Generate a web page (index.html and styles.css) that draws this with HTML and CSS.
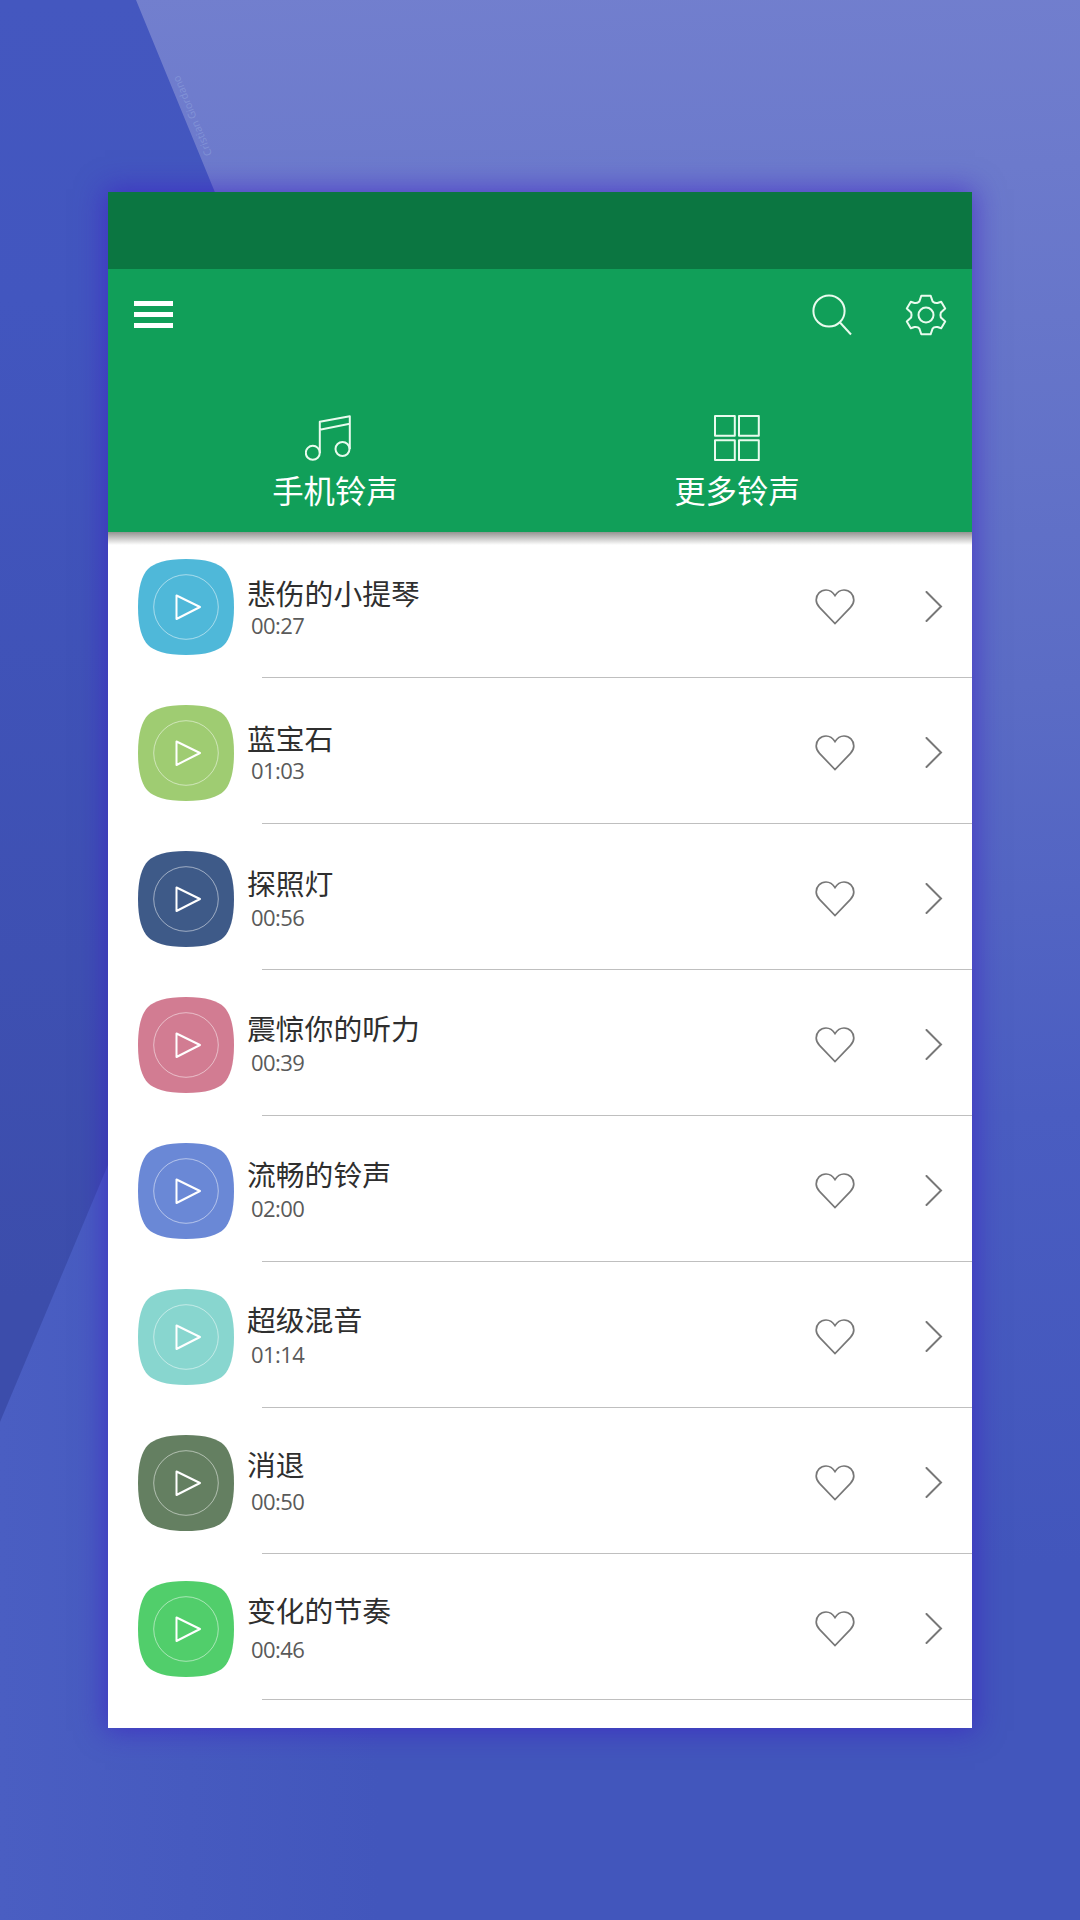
FILE: index.html
```html
<!DOCTYPE html>
<html lang="zh-CN">
<head>
    <meta charset="UTF-8">
    <meta name="viewport" content="width=device-width, initial-scale=1.0">
    <title>手机铃声</title>
    <link rel="stylesheet" href="styles.css">
</head>
<body>
    <div class="backdrop">
        <div class="shape-top"></div>
        <div class="shape-bottom"></div>
        <span class="signature">Cristian Giordano</span>
    </div>

    <div class="phone">
        <div class="status-bar"></div>
        <header class="header">
            <div class="toolbar">
                <div class="menu-btn"><span></span><span></span><span></span></div>
                <div class="actions">
                    <svg class="icon" width="40" height="42" viewBox="0 0 40 42">
                        <circle cx="17" cy="17" r="15.6"/>
                        <path d="M28 28.5L39 40.5"/>
                    </svg>
                    <svg class="icon" width="42" height="42" viewBox="-21 -21 42 42">
                        <path d="M-4.7-19.3H4.6L6.6-13.6Q9-11.5 11.5-12L15.2-13.3L19.2-6.6L14.9-2.6Q14 0 14.9 2.6L19.2 6.6L15.2 13.3L11.5 12Q8 11.5 6.6 13.6L4.6 19.3H-4.7L-6.6 13.6Q-8 11.5-11.5 12L-15.2 13.3L-19.2 6.6L-14.9 2.6Q-14 0-14.9-2.6L-19.2-6.6L-15.2-13.3L-11.5-12Q-9-11.5-6.6-13.6Z"/>
                        <circle r="7.5"/>
                    </svg>
                </div>
            </div>
            <nav class="tabs">
                <div class="tab">
                    <svg class="icon icon-music" width="46" height="46" viewBox="0 0 46 46">
                        <circle cx="7.8" cy="37.8" r="7"/>
                        <circle cx="37.5" cy="34" r="7"/>
                        <path d="M14.8 38V6.8L44.8 1.2V34M14.8 14.8L44.8 8.8"/>
                    </svg>
                    <span>手机铃声</span>
                </div>
                <div class="tab">
                    <svg class="icon" width="46" height="46" viewBox="0 0 46 46">
                        <path d="M1 1H20.8V20.8H1ZM25 1H44.8V20.8H25ZM1 25.2H20.8V45H1ZM25 25.2H44.8V45H25Z"/>
                    </svg>
                    <span>更多铃声</span>
                </div>
            </nav>
        </header>

        <ul class="song-list"></ul>
    </div>

    <script src="script.js"></script>
</body>
</html>
```
FILE: styles.css
```css
* {
    box-sizing: border-box;
}

body {
    margin: 0;
    height: 1920px;
    padding: 192px 108px;
    position: relative;
    overflow: hidden;
    font-family: "Noto Sans CJK SC", sans-serif;
}

/* background */
.backdrop {
    position: absolute;
    inset: 0;
    z-index: -1;
    background: linear-gradient(180deg, #4457bf 0, #4256bf 300px, #3c4dab 1300px, #3c4dab 1500px);
}

.shape-top {
    position: absolute;
    inset: 0;
    background: linear-gradient(178deg, #727fce 0, #6c7acc 200px, #5b6cc5 720px, #4a5dc1 1150px, #4256bc 1600px, #4256bc 100%);
    clip-path: polygon(136px 0, 100% 0, 100% 100%, 600px 100%, 600px 1130px);
}

.shape-bottom {
    position: absolute;
    inset: 0;
    background: linear-gradient(90deg, #4a5ec2 0, #4256bc 380px);
    clip-path: polygon(0 1422px, 500px 232px, 960px 1728px, 960px 100%, 0 100%);
}

.signature {
    position: absolute;
    left: 147px;
    top: 109px;
    width: 90px;
    text-align: center;
    line-height: 14px;
    font-family: "Open Sans", sans-serif;
    font-size: 10.5px;
    white-space: nowrap;
    color: rgba(150, 170, 225, 0.5);
    transform: rotate(247.5deg);
}

/* app screen */
.phone {
    height: 1536px;
    background-color: #fff;
    box-shadow: 0 0 26px 3px rgba(58, 20, 195, 0.55);
}

.status-bar {
    height: 77px;
    background-color: #0b7641;
}

.header {
    position: relative;
    height: 263px;
    background-color: #119f59;
}

.header::after {
    content: "";
    position: absolute;
    left: 0;
    right: 0;
    top: 100%;
    height: 13px;
    background: linear-gradient(#959492, rgba(255, 255, 255, 0));
}

.toolbar {
    display: flex;
    justify-content: space-between;
    align-items: center;
    height: 91px;
    padding: 0 25px 0 26px;
}

.menu-btn {
    display: flex;
    flex-direction: column;
    gap: 6px;
    width: 39px;
}

.menu-btn span {
    height: 4.7px;
    background-color: #fff;
}

.actions {
    display: flex;
    gap: 53px;
}

.icon {
    display: block;
    fill: none;
    stroke: #e9fbee;
    stroke-width: 2;
    stroke-linejoin: round;
}

.icon-music {
    margin-right: 14px;
}

.tabs {
    display: flex;
    padding: 55px 34px 0 26px;
}

.tab {
    flex: 1;
    display: flex;
    flex-direction: column;
    align-items: center;
    gap: 7px;
    font-size: 31.4px;
    line-height: 44px;
    color: #fff;
}

/* ringtones */
.song-list {
    list-style: none;
    margin: 0;
    padding: 0;
}

.song {
    position: relative;
    display: flex;
    align-items: center;
    height: 146px;
    padding: 4px 29px 0 30px;
}

.song::after {
    content: "";
    position: absolute;
    left: 154px;
    right: 0;
    bottom: 0;
    height: 1px;
    background-color: #bfbfbf;
}

.play-btn circle,
.play-btn .triangle {
    fill: none;
    stroke: #fff;
}

.play-btn circle {
    opacity: 0.5;
}

.play-btn .triangle {
    stroke-width: 2;
    stroke-linejoin: round;
}

.song-info {
    align-self: flex-start;
    flex: 1;
    margin-left: 13px;
}

.song-title {
    font-size: 28.8px;
    line-height: 34px;
    color: #2f2f2f;
}

.song-time {
    padding-left: 4px;
    font-family: "Open Sans", sans-serif;
    font-size: 22px;
    line-height: 24px;
    letter-spacing: -0.55px;
    color: #5a5a5a;
}

.heart,
.arrow {
    fill: none;
    stroke: #777;
    stroke-width: 1.7;
}

.heart {
    margin-right: 70px;
}

.arrow {
    stroke-width: 2;
    stroke-linecap: round;
}
```
FILE: script.js
```javascript
// top = space above the title, gap = space between title and time
const songs = [
    { title: "悲伤的小提琴", time: "00:27", color: "#4fb8d9", top: 40, gap: 3 },
    { title: "蓝宝石", time: "01:03", color: "#9fcc72", top: 39, gap: 3 },
    { title: "探照灯", time: "00:56", color: "#3e5a88", top: 38, gap: 5 },
    { title: "震惊你的听力", time: "00:39", color: "#d27c92", top: 37, gap: 5 },
    { title: "流畅的铃声", time: "02:00", color: "#6a88d6", top: 37, gap: 5 },
    { title: "超级混音", time: "01:14", color: "#88d6cf", top: 36, gap: 6 },
    { title: "消退", time: "00:50", color: "#647f61", top: 35, gap: 8 },
    { title: "变化的节奏", time: "00:46", color: "#51ce6b", top: 35, gap: 10 }
];

document.querySelector('.song-list').innerHTML = songs.map(song => `
    <li class="song">
        <svg class="play-btn" width="96" height="96" viewBox="0 0 96 96">
            <path fill="${song.color}" d="M48 0C68 0 80 4 86 10S96 28 96 48S92 80 86 86S68 96 48 96S16 92 10 86S0 68 0 48S4 16 10 10S28 0 48 0Z"/>
            <circle cx="48" cy="48" r="32.3"/>
            <path class="triangle" d="M38.5 36.5V60L62 48Z"/>
        </svg>
        <div class="song-info" style="padding-top: ${song.top}px">
            <div class="song-title">${song.title}</div>
            <div class="song-time" style="margin-top: ${song.gap}px">${song.time}</div>
        </div>
        <svg class="heart" width="40" height="36" viewBox="0 0 40 36">
            <path d="M20 6.6C17.5 2.5 14.5 1 11 1C5.5 1 1.2 5.5 1.2 11C1.2 14 2.3 16 4.5 18.3L20 34.6L35.5 18.3C37.7 16 38.8 14 38.8 11C38.8 5.5 34.5 1 29 1C25.5 1 22.5 2.5 20 6.6Z"/>
        </svg>
        <svg class="arrow" width="18" height="32" viewBox="0 0 18 32">
            <path d="M1.5 1L16 15.5L1.5 30"/>
        </svg>
    </li>
`).join('');
```
